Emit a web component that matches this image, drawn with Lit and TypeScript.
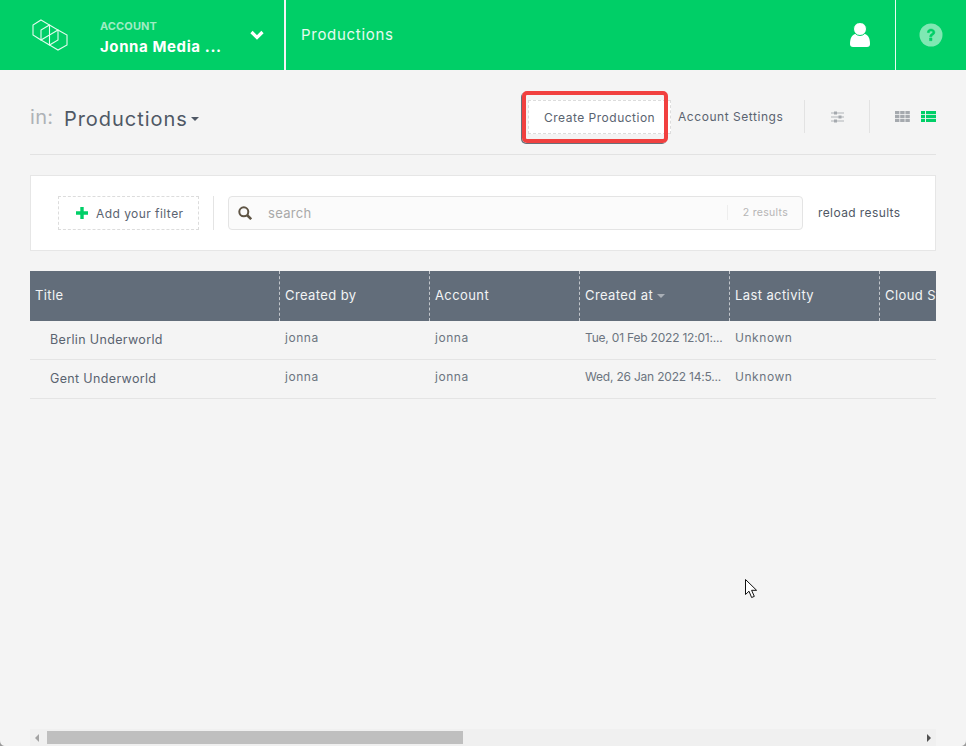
import { LitElement, html, svg, css } from "lit";
import { customElement } from "lit/decorators.js";

const cols = [
  { t: "Title", w: 250 },
  { t: "Created by", w: 150 },
  { t: "Account", w: 150 },
  { t: "Created at", w: 150, sort: true },
  { t: "Last activity", w: 150 },
  { t: "Cloud Storage", w: 150 },
];
const rows = [
  ["Berlin Underworld", "jonna", "jonna", "Tue, 01 Feb 2022 12:01:...", "Unknown", ""],
  ["Gent Underworld", "jonna", "jonna", "Wed, 26 Jan 2022 14:5...", "Unknown", ""],
];
const cellClass = ["first", "", "", "date", "", ""];

@customElement("app-root")
export class AppRoot extends LitElement {
  static styles = css`
    :host {
      display: flex;
      flex-direction: column;
      position: relative;
      height: 746px;
      width: 966px;
      overflow: hidden;
      background: #f4f4f4;
      font-family: "Inter", "DejaVu Sans", sans-serif;
      color: #5a6370;
      letter-spacing: 0.3px;
    }
    .topbar { display: flex; height: 70px; background: #00cf67; color: #fff; flex: none; }
    .brand { width: 284px; display: flex; align-items: center; border-right: 2px solid #f4f4f4; box-sizing: content-box; flex: none; }
    .logo { margin-left: 32px; width: 36px; height: 32px; flex: none; }
    .acct { margin-left: 32px; width: 126px; margin-top: 7px; }
    .acct small { display: block; font-size: 11px; font-weight: 700; color: #9fecc3; line-height: 13px; letter-spacing: 0.1px; }
    .acct b { display: block; font-size: 15px; line-height: 22px; white-space: nowrap; margin-top: 3px; letter-spacing: 0.6px; }
    .chev { margin-left: 24px; width: 14px; height: 10px; }
    .crumb { flex: 1; padding-left: 15px; font-size: 15px; line-height: 69px; color: #e6fbf0; letter-spacing: 0.7px; }
    .user { width: 20px; height: 24px; margin: 23px 25px 0 0; }
    .help { width: 70px; border-left: 1px solid #e6fbf0; display: flex; align-items: center; justify-content: center; }
    .help svg { width: 24px; height: 24px; }

    main { flex: 1; padding: 0 30px; min-height: 0; }
    .titlebar { height: 84px; border-bottom: 1px solid #e2e2e2; display: flex; align-items: flex-start; }
    .in { font-size: 20px; color: #aeb2b7; margin-top: 33px; line-height: 28px; width: 34px; }
    .ptitle { font-size: 20px; color: #4f5865; margin-top: 35px; line-height: 28px; display: flex; align-items: center; gap: 3px; letter-spacing: 0.95px; }
    .caret { width: 0; height: 0; border: 4px solid transparent; border-top-color: #4f5865; border-bottom: 0; }
    .spacer { flex: 1; }
    .actions { display: flex; align-items: flex-start; margin-top: 30px; }
    .btn-create { position: relative; box-sizing: border-box; width: 143px; height: 34px; margin-right: 7px; background: #fff; border: 1px dashed #dcdcdc; font-size: 12px; color: #5a6370; line-height: 33px; padding-left: 15px; white-space: nowrap; letter-spacing: 0.5px; }
    .highlight { position: absolute; left: -7px; top: -10px; width: 146px; height: 52px; box-sizing: border-box; border: 4px solid #f1403f; border-radius: 5px; box-shadow: -1px 1px 0 #6a6f78; pointer-events: none; }
    .link { font-size: 12px; color: #5a6370; line-height: 33px; white-space: nowrap; width: 126px; letter-spacing: 0.55px; flex: none; }
    .sep { width: 1px; height: 33px; background: #e2e2e2; flex: none; }
    .sliders { width: 13px; height: 12px; margin: 11px 25px 0 26px; flex: none; }
    .grid { width: 15px; height: 11px; margin-top: 11px; flex: none; }

    .filters { margin-top: 20px; height: 76px; box-sizing: border-box; background: #fff; border: 1px solid #e6e6e6; display: flex; align-items: center; padding-left: 27px; }
    .addf { box-sizing: border-box; width: 141px; height: 34px; border: 1px dashed #dcdcdc; display: flex; align-items: center; gap: 8px; padding-left: 17px; font-size: 12px; color: #5a6370; white-space: nowrap; letter-spacing: 0.45px; }
    .plus { width: 12px; height: 12px; flex: none; }
    .vr { width: 1px; height: 34px; background: #e4e4e4; margin: 0 14px; flex: none; }
    .search { box-sizing: border-box; width: 575px; height: 34px; border: 1px solid #e4e4e4; border-radius: 4px; background: #fbfbfb; display: flex; align-items: center; font-size: 13px; color: #a9a9a9; flex: none; }
    .mag { width: 14px; height: 14px; margin-left: 9px; flex: none; }
    .search .q { margin-left: 16px; flex: 1; }
    .count { font-size: 10.500px; color: #b5b5b5; border-left: 1px solid #eeeeee; padding-left: 15px; margin-right: 14px; line-height: 15px; white-space: nowrap; margin-bottom: 2px; }
    .reload { margin-left: 15px; margin-bottom: 2px; font-size: 12px; color: #4f5865; white-space: nowrap; letter-spacing: 0.4px; }

    .tablewrap { margin-top: 20px; overflow: hidden; width: 906px; }
    .tr { display: flex; width: 1000px; }
    .th { height: 50px; box-sizing: border-box; background: #626d7a; color: #f2f4f5; font-size: 13px; line-height: 48px; padding-left: 5px; border-right: 1px dashed #c3c7cc; flex: none; white-space: nowrap; overflow: hidden; letter-spacing: 0.4px; }
    .sort { display: inline-block; width: 0; height: 0; border: 4px solid transparent; border-top-color: #a9afb6; border-bottom: 0; margin-left: 4px; vertical-align: 2px; }
    .row { border-bottom: 1px solid #e4e4e4; width: 906px; height: 39px; box-sizing: border-box; display: flex; }
    .td { box-sizing: border-box; padding: 0 0 0 5px; font-size: 12px; line-height: 34px; color: #6c7480; flex: none; white-space: nowrap; letter-spacing: 0.55px; }
    .td.first { padding-left: 20px; font-size: 12.500px; line-height: 37px; color: #5a6370; letter-spacing: 0.35px; }
    .td.date { letter-spacing: -0.2px; }

    .scroll { position: absolute; left: 30px; top: 729px; width: 906px; height: 17px; background: #f0f0f0; }
    .thumb { position: absolute; left: 17px; top: 2px; width: 416px; height: 13px; background: #bfbfbf; }
    .arr { position: absolute; top: 5px; width: 0; height: 0; border: 4px solid transparent; }
    .arr.l { left: 5px; border-left: 0; border-right-color: #a3a3a3; }
    .arr.r { right: 5px; border-right: 0; border-left-color: #505050; }
    .cursor { position: absolute; left: 745px; top: 579px; width: 14px; height: 20px; }
    .corner { position: absolute; top: 740px; width: 6px; height: 6px; }
    .corner.cl { left: 0; }
    .corner.cr { right: 0; transform: scaleX(-1); }
  `;

  render() {
    return html`
      <div class="topbar">
        <div class="brand">
          <svg class="logo" viewBox="0 0 36 32" fill="none" stroke="#e2fbee" stroke-width="1.100">
            <path d="M9 1l8.500 5v10L9 21l-8-5V6z"/>
            <path d="M17.500 6l8.500 5v10l-8.500 5-8.500-5V11z"/>
            <path d="M26 11l9 5v10l-9 5-8.500-5V16z"/>
          </svg>
          <div class="acct"><small>ACCOUNT</small><b>Jonna Media ...</b></div>
          <svg class="chev" viewBox="0 0 14 10" fill="none" stroke="#fff" stroke-width="3.200"><path d="M1.500 2 7 7.500 12.500 2"/></svg>
        </div>
        <div class="crumb">Productions</div>
        <svg class="user" viewBox="0 0 20 24" fill="#fff">
          <path d="M0 21c0-6 2-9 5-10h10c3 1 5 4 5 10 0 2-1 3-3 3H3c-2 0-3-1-3-3z"/>
          <circle cx="10" cy="6" r="6.500" stroke="#00cf67" stroke-width="1"/>
        </svg>
        <div class="help">
          <svg viewBox="0 0 24 24"><circle cx="12" cy="12" r="11.500" fill="#7fe8b3"/><path d="M8.300 9.500c0-2.200 1.700-3.500 3.700-3.500s3.900 1.400 3.900 3.200c0 2.800-3 2.700-3 4.600h-2.200c0-3.200 3-3 3-4.500 0-.7-.7-1.200-1.700-1.200s-1.500.6-1.700 1.600zM10.500 15h2.500v2.700h-2.500z" fill="#00cf67" stroke="#00cf67" stroke-width=".5"/></svg>
        </div>
      </div>
      <main>
        <div class="titlebar">
          <div class="in">in:</div>
          <div class="ptitle">Productions<span class="caret"></span></div>
          <div class="spacer"></div>
          <div class="actions">
            <div class="btn-create">Create Production<span class="highlight"></span></div>
            <div class="link">Account Settings</div>
            <div class="sep"></div>
            <svg class="sliders" viewBox="0 0 13 12" stroke="#b0b3b7" stroke-width="1.200" fill="#a5a9ae"><path d="M0 2h13M0 6h13M0 10h13" fill="none"/><rect x="3" y="0.500" width="3" height="3" stroke="none"/><rect x="7.500" y="4.500" width="3" height="3" stroke="none"/><rect x="3" y="8.500" width="3" height="3" stroke="none"/></svg>
            <div class="sep"></div>
            <svg class="grid" style="margin-left:25px" viewBox="0 0 15 11" fill="#a5a9ae">
              ${[0, 4, 8].map((y) => [0, 5.2, 10.4].map((x) => svg`<rect x=${x} y=${y} width="4.400" height="3.200"/>`))}
            </svg>
            <svg class="grid" style="margin-left:11px" viewBox="0 0 15 11" fill="#00cf67">
              ${[0, 4, 8].map((y) => svg`<rect x="0" y=${y} width="4" height="3.200"/><rect x="5" y=${y} width="10" height="3.200"/>`)}
            </svg>
          </div>
        </div>
        <div class="filters">
          <div class="addf">
            <svg class="plus" viewBox="0 0 12 12" fill="#00cf67"><path d="M4.300 0h3.400v4.300H12v3.400H7.700V12H4.300V7.700H0V4.300h4.300z"/></svg>
            Add your filter
          </div>
          <div class="vr"></div>
          <div class="search">
            <svg class="mag" viewBox="0 0 14 14" fill="none" stroke="#5f5545" stroke-width="2"><circle cx="5.800" cy="5.800" r="4.500"/><path d="M9 9l4.200 4.200" stroke-width="2.500"/></svg>
            <span class="q">search</span>
            <span class="count">2 results</span>
          </div>
          <div class="reload">reload results</div>
        </div>
        <div class="tablewrap">
          <div class="tr">
            ${cols.map((c) => html`<div class="th" style="width:${c.w}px">${c.t}${c.sort ? html`<span class="sort"></span>` : ""}</div>`)}
          </div>
          ${rows.map((r) => html`<div class="row">
            ${r.map((v, i) => html`<div class="td ${cellClass[i]}" style="width:${cols[i].w}px">${v}</div>`)}
          </div>`)}
        </div>
      </main>
      <div class="scroll"><span class="arr l"></span><div class="thumb"></div><span class="arr r"></span></div>
      <svg class="corner cl" viewBox="0 0 6 6"><path d="M0 0C0 4 2 6 6 6H0z" fill="#9a9a9a"/></svg>
      <svg class="corner cr" viewBox="0 0 6 6"><path d="M0 0C0 4 2 6 6 6H0z" fill="#9a9a9a"/></svg>
      <svg class="cursor" viewBox="0 0 14 20"><path d="M.5.500v15l3.500-3.300 2.600 6.300 2.700-1.100-2.700-6.100h5z" fill="#fff" stroke="#111" stroke-width="1"/></svg>
    `;
  }
}
